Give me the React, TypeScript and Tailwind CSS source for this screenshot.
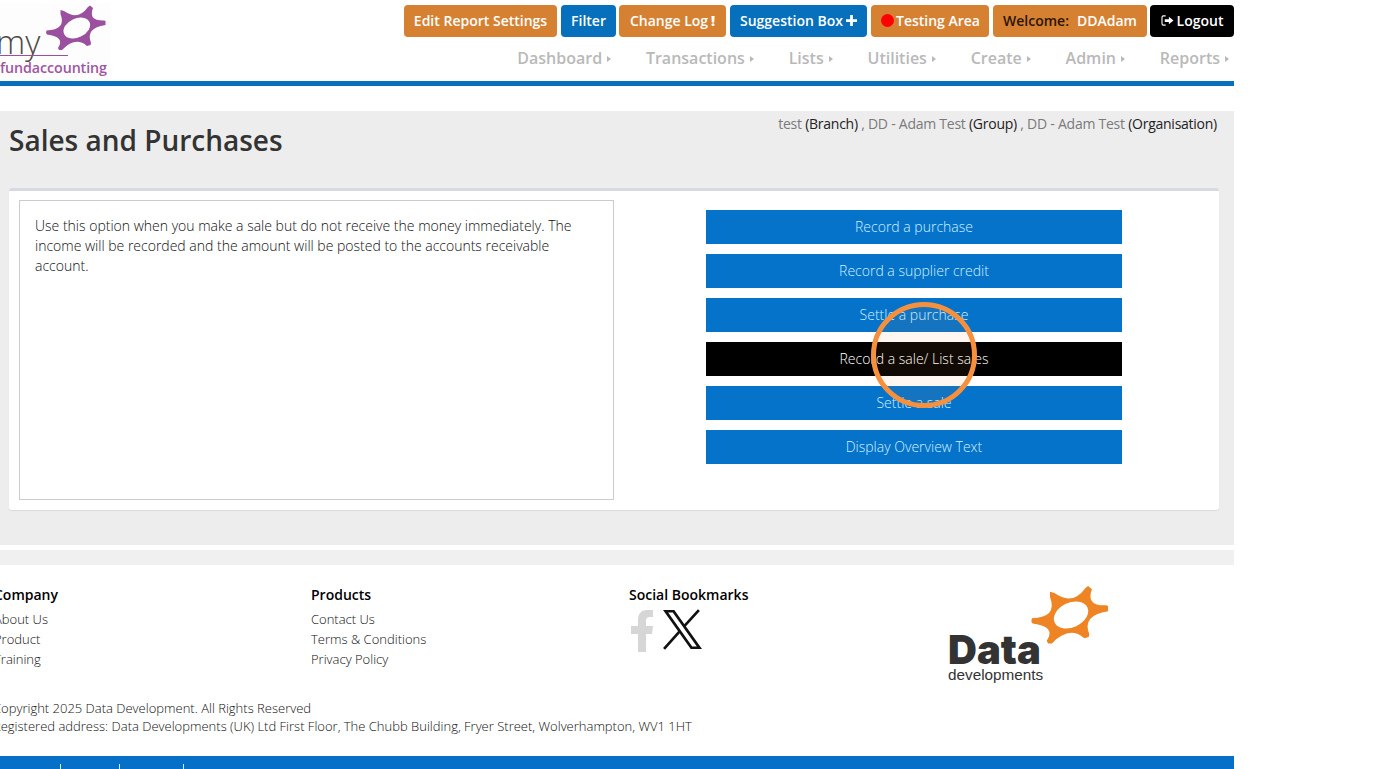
import React from "react";

const Star = ({ fill, className }: { fill: string; className: string }) => (
  <svg viewBox="45 5 62 46" className={className}>
    <path
      fillRule="evenodd"
      fill={fill}
      d="M60.500 10 L64 11 Q78 21 88 7 L90 5.500 L93 8 Q88 21 104 20.500 L105.500 21 L105.500 25 Q85 28 91 43 L90.500 45 L87 46 Q75.500 36 62 50 L59 50 L58 48 Q65.500 36.800 47 34.500 L46 33 L46.500 30.500 Q66.500 29.800 60.500 14 Z M64.100 33.900 A14 9.500 -25 1 0 89.500 22.100 A14 9.500 -25 1 0 64.100 33.900 Z"
    />
  </svg>
);

const Btn = ({ c, children, w }: { c: string; children: React.ReactNode; w: string }) => (
  <div className={`${c} ${w} h-8 pb-[1px] rounded-[4px] flex items-center justify-center text-[14px] font-semibold text-white whitespace-nowrap`}>
    {children}
  </div>
);

const Nav = ({ t }: { t: string }) => (
  <div className="flex items-center text-[16px] font-semibold text-[#b9b9b9]">
    {t}
    <span className="ml-[5px] mt-[2px] w-0 h-0 border-y-[3.5px] border-y-transparent border-l-[4px] border-l-[#b9b9b9]" />
  </div>
);

const Action = ({ t, dark }: { t: string; dark?: boolean }) => (
  <div className={`${dark ? "bg-black text-white" : "bg-[#0573ca] text-[#d2f1ff]"} h-[34px] pb-[2px] flex items-center justify-center text-[14px] font-light`}>
    {t}
  </div>
);

const FootCol = ({ title, links, className }: { title: string; links: string[]; className: string }) => (
  <div className={`${className} shrink-0`}>
    <div className="text-[14px] font-semibold text-black leading-5">{title}</div>
    <div className="mt-[4px] text-[13px] font-light leading-5 text-[#111]">
      {links.map((l) => (
        <div key={l}>{l}</div>
      ))}
    </div>
  </div>
);

export default function App() {
  return (
    <div className="relative w-[1377px] h-[769px] overflow-hidden bg-white" style={{ fontFamily: '"Open Sans", sans-serif' }}>
      <div className="w-[1234px]">
        {/* header */}
        <header className="h-[86px] border-b-[5px] border-[#0670bd] flex justify-between">
          <div className="w-[110px] h-[75px] mt-[3px] relative overflow-hidden bg-[#fdfdfd]">
            <Star fill="#9b4f9f" className="absolute left-[45px] top-[2px] w-[62px] h-[46px]" />
            <div className="absolute left-[-4px] top-[19px] text-[33px] leading-[40px] font-light text-[#4f4946]">my</div>
            <div className="absolute left-0 top-[52px] w-[68px] h-px bg-[#9b4f9f]" />
            <div className="absolute left-0 top-[55px] text-[14.300px] leading-5 font-semibold text-[#a0569f] whitespace-nowrap tracking-[-0.1px]">fundaccounting</div>
          </div>
          <div className="flex flex-col items-end pt-[5px]">
            <div className="flex gap-[4px]">
              <Btn c="bg-[#d68132]" w="w-[153px]">Edit Report Settings</Btn>
              <Btn c="bg-[#0670bd]" w="w-[55px]">Filter</Btn>
              <Btn c="bg-[#d68132]" w="w-[107px] -ml-px">
                Change Log <span className="ml-[3px] font-extrabold">!</span>
              </Btn>
              <Btn c="bg-[#0670bd]" w="w-[137px]">
                Suggestion Box
                <svg viewBox="0 0 12 12" className="w-[11px] h-[11px] ml-[3px]"><path d="M4.500 0h3v4.500H12v3H7.500V12h-3V7.500H0v-3h4.500z" fill="#fff" /></svg>
              </Btn>
              <Btn c="bg-[#d68132]" w="w-[118px]">
                <span className="w-[13px] h-[13px] rounded-full bg-[#ff0000] mr-[2px] ml-[1px]" />
                Testing Area
              </Btn>
              <Btn c="bg-[#d68132]" w="w-[154px]">
                <span className="text-[#2a1505]">Welcome:</span>
                <span className="ml-2">DDAdam</span>
              </Btn>
              <Btn c="bg-black" w="w-[84px] -ml-px">
                <svg viewBox="0 0 14 12" className="w-[13px] h-[11px] mr-[3px]">
                  <path d="M5 1H2.500A1.500 1.500 0 0 0 1 2.500v7A1.500 1.500 0 0 0 2.500 11H5" fill="none" stroke="#fff" strokeWidth="1.200" />
                  <path d="M4 4.500h4.500V2L13.500 6 8.500 10V7.500H4z" fill="#fff" />
                </svg>
                Logout
              </Btn>
            </div>
            <div className="flex gap-[34.800px] mt-[9px] pr-[5px] leading-[24px]">
              {["Dashboard", "Transactions", "Lists", "Utilities", "Create", "Admin", "Reports"].map((t) => (
                <Nav key={t} t={t} />
              ))}
            </div>
          </div>
        </header>

        {/* main */}
        <main className="mt-[25px] h-[434px] bg-[#eeedee] relative px-[9px] pt-[1px]">
          <div className="absolute right-[17px] top-[3px] text-[14px] leading-5 text-[#7a7a7a] tracking-[-0.25px]">
            test <span className="text-[#222]">(Branch)</span> , DD - Adam Test <span className="text-[#222]">(Group)</span> , DD - Adam Test <span className="text-[#222]">(Organisation)</span>
          </div>
          <h1 className="text-[28px] font-semibold leading-[38px] text-[#333] mt-[9px]">Sales and Purchases</h1>
          <section className="mt-[29px] w-[1210px] h-[322px] bg-white border-t-[3px] border-[#d6d9e1] rounded-[3px] shadow-[0_1px_1px_rgba(0,0,0,0.08)] flex pl-[10px] pt-[9px]">
            <div className="w-[595px] h-[300px] border border-[#cccccc] px-[15px] py-[15px] text-[14px] font-light leading-5 text-[#111]">
              Use this option when you make a sale but do not receive the money immediately. The income will be recorded and the amount will be posted to the accounts receivable account.
            </div>
            <div className="ml-[92px] w-[416px] pt-[10px] flex flex-col gap-[10px]">
              <Action t="Record a purchase" />
              <Action t="Record a supplier credit" />
              <Action t="Settle a purchase" />
              <Action t="Record a sale/ List sales" dark />
              <Action t="Settle a sale" />
              <Action t="Display Overview Text" />
            </div>
          </section>
        </main>

        <div className="mt-[5px] h-[15px] bg-[#f1f0f1]" />

        {/* footer */}
        <footer className="h-[191px] pt-[20px] ml-[-7px]">
          <div className="flex">
            <FootCol className="w-[317px] ml-[1px]" title="Company" links={["About Us", "Product", "Training"]} />
            <FootCol className="w-[318px]" title="Products" links={["Contact Us", "Terms & Conditions", "Privacy Policy"]} />
            <div className="w-[318px] shrink-0">
              <div className="text-[14px] font-semibold text-black leading-5">Social Bookmarks</div>
              <div className="flex items-start gap-[9px] mt-[5px] ml-[2px]">
                <svg viewBox="0 0 22 42" className="w-[22px] h-[42px]">
                  <path d="M7 42V24H0v-8h7v-6C7 3 11 0 16 0h6v7h-3c-3 0-4 1.500-4 4v5h7l-1 8h-6v18z" fill="#d6d6d6" />
                </svg>
                <svg viewBox="0 0 40 40" className="w-[41px] h-[41px] -mt-px">
                  <path d="M1 1h11l27 38H28zM6 3.500l23.500 33h4.500L10.500 3.500z" fill="#111" fillRule="evenodd" />
                  <path d="M36 1L22 16.500 M2 39l15-17" stroke="#111" strokeWidth="2.600" fill="none" />
                </svg>
              </div>
            </div>
            <div className="relative w-[170px] h-[100px]">
              <Star fill="#ee8423" className="absolute left-[83px] top-[0px] w-[80px] h-[60px]" />
              <div className="absolute left-[1px] top-[42px] text-[40px] leading-[46px] font-black text-[#333]" style={{ fontFamily: "Inter, sans-serif" }}>Data</div>
              <div className="absolute left-[1px] top-[80px] text-[15.300px] leading-5 font-normal text-[#333]" style={{ fontFamily: '"Liberation Sans", sans-serif' }}>developments</div>
            </div>
          </div>
          <div className="mt-[14px] text-[13px] font-light leading-[18px] text-[#111]">
            <div>Copyright 2025 Data Development. All Rights Reserved</div>
            <div>Registered address: Data Developments (UK) Ltd First Floor, The Chubb Building, Fryer Street, Wolverhampton, WV1 1HT</div>
          </div>
        </footer>

        <div className="h-[20px] bg-[#0670c8] flex pt-[8px]">
          <div className="w-[61px] border-r border-[#cfeefc]" />
          <div className="w-[59px] border-r border-[#cfeefc]" />
          <div className="w-[64px] border-r border-[#cfeefc]" />
        </div>
      </div>

      {/* highlight ring */}
      <div className="absolute left-[871px] top-[302px] w-[106px] h-[106px] rounded-full border-[5px] border-[#f6903d] bg-[#f6903d]/[0.07]" />
    </div>
  );
}
